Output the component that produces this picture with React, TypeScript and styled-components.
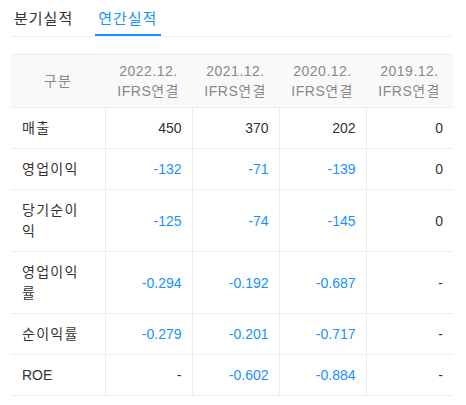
import * as React from 'react';
import styled, { createGlobalStyle } from 'styled-components';

const GlobalStyle = createGlobalStyle`
    body {
        margin: 0;
        background: #ffffff;
        font-family: "Liberation Sans", "Noto Sans CJK KR", sans-serif;
    }
`;

const columns = ['2022.12.', '2021.12.', '2020.12.', '2019.12.'];

const rows = [
    { label: '매출', values: ['450', '370', '202', '0'] },
    { label: '영업이익', values: ['-132', '-71', '-139', '0'] },
    { label: '당기순이익', values: ['-125', '-74', '-145', '0'], tall: true },
    { label: '영업이익률', values: ['-0.294', '-0.192', '-0.687', '-'], tall: true },
    { label: '순이익률', values: ['-0.279', '-0.201', '-0.717', '-'] },
    { label: 'ROE', values: ['-', '-0.602', '-0.884', '-'] },
];

const isNegative = (v: string) => v.startsWith('-') && v.length > 1;
const isKorean = (s: string) => /[가-힣]/.test(s);

export default function App() {
    const [tab, setTab] = React.useState(1);

    return (
        <Page>
            <GlobalStyle />
            <Tabs>
                {['분기실적', '연간실적'].map((name, i) => (
                    <Tab key={name} $active={tab === i} onClick={() => setTab(i)}>{name}</Tab>
                ))}
            </Tabs>
            <Table>
                <colgroup>
                    <col style={{ width: 94 }} />
                    {columns.map(c => <col key={c} style={{ width: 87 }} />)}
                </colgroup>
                <thead>
                    <tr>
                        <HeadCell><Ko>구분</Ko></HeadCell>
                        {columns.map(c => (
                            <HeadCell key={c}>{c}<br />IFRS<Ko>연결</Ko></HeadCell>
                        ))}
                    </tr>
                </thead>
                <tbody>
                    {rows.map(row => (
                        <Row key={row.label}>
                            <LabelCell>
                                {isKorean(row.label)
                                    ? <Ko $wrap={row.tall}>{row.label}</Ko>
                                    : row.label}
                            </LabelCell>
                            {row.values.map((v, i) => (
                                <ValueCell key={i} $negative={isNegative(v)}>{v}</ValueCell>
                            ))}
                        </Row>
                    ))}
                </tbody>
            </Table>
        </Page>
    );
}

const Page = styled.div`
    width: 441px;
    padding: 0 0 0 11px;
    font-size: 14px;
    color: #333333;
`;

const Ko = styled.span<{ $wrap?: boolean }>`
    letter-spacing: 1.3px;
    ${p => p.$wrap && `
        display: block;
        width: 66px;
        line-height: 20.5px;
        word-break: break-all;
    `}
`;

const Tabs = styled.div`
    display: flex;
    gap: 18px;
    height: 36px;
    border-bottom: 1px solid #eeeeee;
    margin-bottom: 17px;
`;

const Tab = styled.div<{ $active: boolean }>`
    padding: 9px 4px 0 3px;
    height: 25px;
    line-height: 20px;
    font-size: 15px;
    letter-spacing: 1px;
    cursor: pointer;
    color: ${p => (p.$active ? '#1890ff' : '#333333')};
    border-bottom: 2px solid ${p => (p.$active ? '#1890ff' : 'transparent')};
`;

const Table = styled.table`
    width: 441px;
    border-collapse: collapse;
    table-layout: fixed;
`;

const HeadCell = styled.th`
    height: 52px;
    padding: 0;
    background: #f9f9f9;
    border-top: 1px solid #eeeeee;
    border-bottom: 1px solid #eeeeee;
    color: #888888;
    font-weight: normal;
    font-size: 14px;
    line-height: 20px;
    letter-spacing: 0.5px;
    text-align: center;
`;

const Row = styled.tr`
    border-bottom: 1px solid #eeeeee;
`;

const LabelCell = styled.td`
    height: 20px;
    padding: 10px 11px;
    line-height: 20px;
    vertical-align: middle;
`;

const ValueCell = styled.td<{ $negative: boolean }>`
    padding: 10px 10px 10px 0;
    line-height: 20px;
    text-align: right;
    border-left: 1px solid #eeeeee;
    color: ${p => (p.$negative ? '#1890ff' : '#333333')};
`;
